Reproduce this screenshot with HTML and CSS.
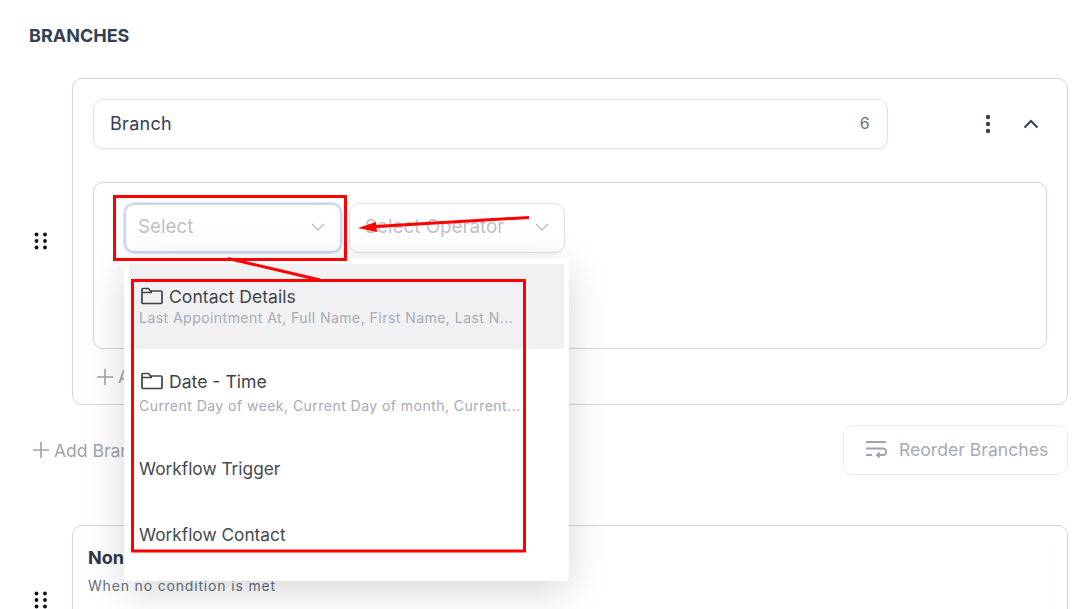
FILE: index.html
```html
<!DOCTYPE html>
<html lang="en">
<head>
  <meta charset="UTF-8">
  <title>Branches</title>
  <link rel="stylesheet" href="styles.css">
</head>
<body>

<div class="branches-page">
  <h2 class="branches-title">BRANCHES</h2>

  <div class="branch-row">
    <svg class="branch-grip" width="14" height="18" viewBox="0 0 14 18"><g fill="#111"><circle cx="2.5" cy="2.500" r="1.900"/><circle cx="11" cy="2.500" r="1.900"/><circle cx="2.5" cy="9" r="1.900"/><circle cx="11" cy="9" r="1.900"/><circle cx="2.5" cy="15.500" r="1.900"/><circle cx="11" cy="15.500" r="1.900"/></g></svg>
    <div class="branch-card">
      <div class="branch-head">
        <div class="branch-name">
          <span>Branch</span>
          <span class="branch-count">6</span>
        </div>
        <div class="branch-actions">
          <svg width="6" height="20" viewBox="0 0 6 20"><g fill="#374151"><circle cx="3" cy="3" r="2.2"/><circle cx="3" cy="10" r="2.2"/><circle cx="3" cy="17" r="2.2"/></g></svg>
          <svg width="16" height="10" viewBox="0 0 16 10"><path d="M1.500 8.500 8 2l6.500 6.500" fill="none" stroke="#374151" stroke-width="2"/></svg>
        </div>
      </div>

      <div class="branch-conditions">
        <div class="select-field select-focused">
          <span>Select</span>
          <svg class="select-chevron" width="14" height="8" viewBox="0 0 14 8"><path d="M1 1l6 6 6-6" fill="none" stroke="#b4b8bf" stroke-width="1.2"/></svg>
        </div>
        <div class="select-field select-operator">
          <span>Select Operator</span>
          <svg class="select-chevron" width="14" height="8" viewBox="0 0 14 8"><path d="M1 1l6 6 6-6" fill="none" stroke="#b4b8bf" stroke-width="1.2"/></svg>
        </div>
      </div>

      <div class="add-link add-segment">
        <svg width="18" height="18" viewBox="0 0 18 18"><path d="M9 1v16M1 9h16" stroke="#9ca3af" stroke-width="1.6"/></svg>
        <span>Add</span>
      </div>
    </div>
  </div>

  <div class="branch-tools">
    <div class="add-link">
      <svg width="18" height="18" viewBox="0 0 18 18"><path d="M9 1v16M1 9h16" stroke="#9ca3af" stroke-width="1.6"/></svg>
      <span>Add Branch</span>
    </div>
    <div class="reorder-btn">
      <svg width="22" height="18" viewBox="0 0 22 18"><path d="M1 2h20M1 8.500h17a3 3 0 0 1 0 6.500h-6M1 15h6M14.500 12.500 12 15l2.500 2.500" fill="none" stroke="#9ca3af" stroke-width="1.800"/></svg>
      <span>Reorder Branches</span>
    </div>
  </div>

  <div class="branch-row none-row">
    <svg class="branch-grip" width="14" height="18" viewBox="0 0 14 18"><g fill="#111"><circle cx="2.5" cy="2.500" r="1.900"/><circle cx="11" cy="2.500" r="1.900"/><circle cx="2.5" cy="9" r="1.900"/><circle cx="11" cy="9" r="1.900"/><circle cx="2.5" cy="15.500" r="1.900"/><circle cx="11" cy="15.500" r="1.900"/></g></svg>
    <div class="branch-card none-card">
      <div class="none-inner">
        <strong>None</strong>
        <span>When no condition is met</span>
      </div>
    </div>
  </div>

  <!-- dropdown lies over the cards -->
  <div class="select-menu">
    <div class="menu-item menu-item-active">
      <div class="menu-label">
        <svg width="22" height="18" viewBox="0 0 22 18"><path d="M1 15.500V2.500a1 1 0 0 1 1-1h5.500l2 2.500H20a1 1 0 0 1 1 1v10.500a1 1 0 0 1-1 1H2a1 1 0 0 1-1-1zM1 5.500h10" fill="none" stroke="#3f4349" stroke-width="1.700"/></svg>
        <span>Contact Details</span>
      </div>
      <div class="menu-sub">Last Appointment At, Full Name, First Name, Last N...</div>
    </div>
    <div class="menu-item">
      <div class="menu-label">
        <svg width="22" height="18" viewBox="0 0 22 18"><path d="M1 15.500V2.500a1 1 0 0 1 1-1h5.500l2 2.500H20a1 1 0 0 1 1 1v10.500a1 1 0 0 1-1 1H2a1 1 0 0 1-1-1zM1 5.500h10" fill="none" stroke="#3f4349" stroke-width="1.700"/></svg>
        <span>Date - Time</span>
      </div>
      <div class="menu-sub menu-sub-low">Current Day of week, Current Day of month, Current...</div>
    </div>
    <div class="menu-plain menu-trigger">Workflow Trigger</div>
    <div class="menu-plain menu-contact">Workflow Contact</div>
  </div>

  <!-- red annotations drawn on the screenshot -->
  <svg class="annotations" width="1087" height="609" viewBox="0 0 1087 609">
    <g fill="none" stroke="#ff0000" stroke-width="3">
      <rect x="114.500" y="196.500" width="231" height="63"/>
      <rect x="132.500" y="280.500" width="392" height="270.500"/>
    </g>
    <path d="M228 258.500 320 280" stroke="#ff0000" stroke-width="3"/>
    <path d="M529 217.500 376 226.500" stroke="#ff0000" stroke-width="3"/>
    <path d="M358 228 376 222 377 232z" fill="#ff0000"/>
  </svg>
</div>

</body>
</html>
```

FILE: styles.css
```css
* {
  box-sizing: border-box;
}

body {
  margin: 0;
  background: #fff;
  font-family: Inter, 'Liberation Sans', sans-serif;
  overflow: hidden;
}

.branches-page {
  position: relative;
  width: 1087px;
  height: 609px;
  padding: 26px 19px 0 29px;
  overflow: hidden;
}

.branches-title {
  margin: 0 0 33px;
  font-size: 18px;
  line-height: 19px;
  font-weight: 700;
  color: #344054;
}

.branch-row {
  display: flex;
  align-items: center;
}

.branch-grip {
  flex: none;
  margin: 0 24px 2px 5px;
}

.branch-card {
  flex: 1;
  height: 327px;
  padding: 20px 20px 0;
  border: 1px solid #d4d4dc;
  border-radius: 10px;
  background: #fff;
}

.branch-head {
  display: flex;
  align-items: center;
}

.branch-name {
  display: flex;
  align-items: center;
  justify-content: space-between;
  width: 795px;
  height: 50px;
  padding: 0 17px 2px 16px;
  border: 1px solid #e0e2e8;
  border-radius: 10px;
  font-size: 18px;
  letter-spacing: 0.3px;
  color: #344054;
  box-shadow: 0 1px 2px rgba(16, 24, 40, 0.04);
}

.branch-count {
  font-size: 16px;
  color: #667085;
}

.branch-actions {
  display: flex;
  align-items: center;
  gap: 32px;
  margin-left: 97px;
}

.branch-conditions {
  display: flex;
  gap: 7px;
  height: 167px;
  margin-top: 33px;
  padding: 20px 30px;
  border: 1px solid #d4d4dc;
  border-radius: 10px;
}

.select-field {
  display: flex;
  align-items: center;
  justify-content: space-between;
  width: 218px;
  height: 50px;
  padding: 0 15px 3px;
  border: 1px solid #e0e2e8;
  border-radius: 10px;
  font-size: 18.800px;
  color: #c1c1c3;
  box-shadow: 0 1px 2px rgba(16, 24, 40, 0.05);
}

.select-focused {
  padding-left: 12px;
  border: 2px solid #c8d8f3;
  box-shadow: 0 0 0 1px #dfe8f8;
}

.select-operator {
  width: 216px;
}

.add-link {
  display: flex;
  align-items: center;
  gap: 4px;
  font-size: 17.500px;
  color: #9ca3af;
}

.add-segment {
  margin: 17px 0 0 3px;
}

.branch-tools {
  display: flex;
  align-items: center;
  justify-content: space-between;
  height: 50px;
  margin-top: 20px;
  padding-left: 3px;
}

.reorder-btn {
  display: flex;
  align-items: center;
  gap: 12px;
  width: 225px;
  height: 50px;
  padding: 0 0 2px 21px;
  border: 1px solid #e8eaee;
  border-radius: 10px;
  font-size: 17.600px;
  color: #a6abb4;
}

.none-row {
  align-items: flex-start;
  margin-top: 50px;
}

.none-row .branch-grip {
  margin-top: 66px;
}

.none-card {
  padding: 21px 15px 0;
}

.none-inner {
  display: flex;
  flex-direction: column;
  gap: 8px;
  height: 200px;
  border-right: 1px solid #f8f8fa;
}

.none-inner strong {
  font-size: 18px;
  line-height: 22px;
  color: #2d3748;
}

.none-inner span {
  font-size: 14px;
  line-height: 18px;
  letter-spacing: 0.83px;
  color: #667085;
}

.select-menu {
  position: absolute;
  top: 258px;
  left: 124px;
  width: 445px;
  height: 323px;
  padding: 6px 5px;
  background: #fff;
  border-radius: 4px;
  box-shadow: 0 10px 40px rgba(0, 0, 0, 0.16);
}

.menu-item {
  height: 85px;
  padding: 21px 10px 0;
  overflow: hidden;
}

.menu-item-active {
  background: #f1f1f4;
}

.menu-label {
  display: flex;
  align-items: center;
  gap: 6px;
  height: 22px;
  padding-left: 2px;
  font-size: 17.600px;
  color: #3f4349;
}

.menu-sub {
  margin-top: 2px;
  font-size: 14px;
  line-height: 18px;
  letter-spacing: 0.46px;
  color: #a6abb7;
  white-space: nowrap;
}

.menu-sub-low {
  margin-top: 5px;
}

.menu-plain {
  padding: 0 10px;
  font-size: 17.300px;
  line-height: 22px;
  color: #45484d;
}

.menu-trigger {
  margin-top: 24px;
}

.menu-contact {
  margin-top: 44px;
}

.annotations {
  position: absolute;
  top: 0;
  left: 0;
  pointer-events: none;
}
```
